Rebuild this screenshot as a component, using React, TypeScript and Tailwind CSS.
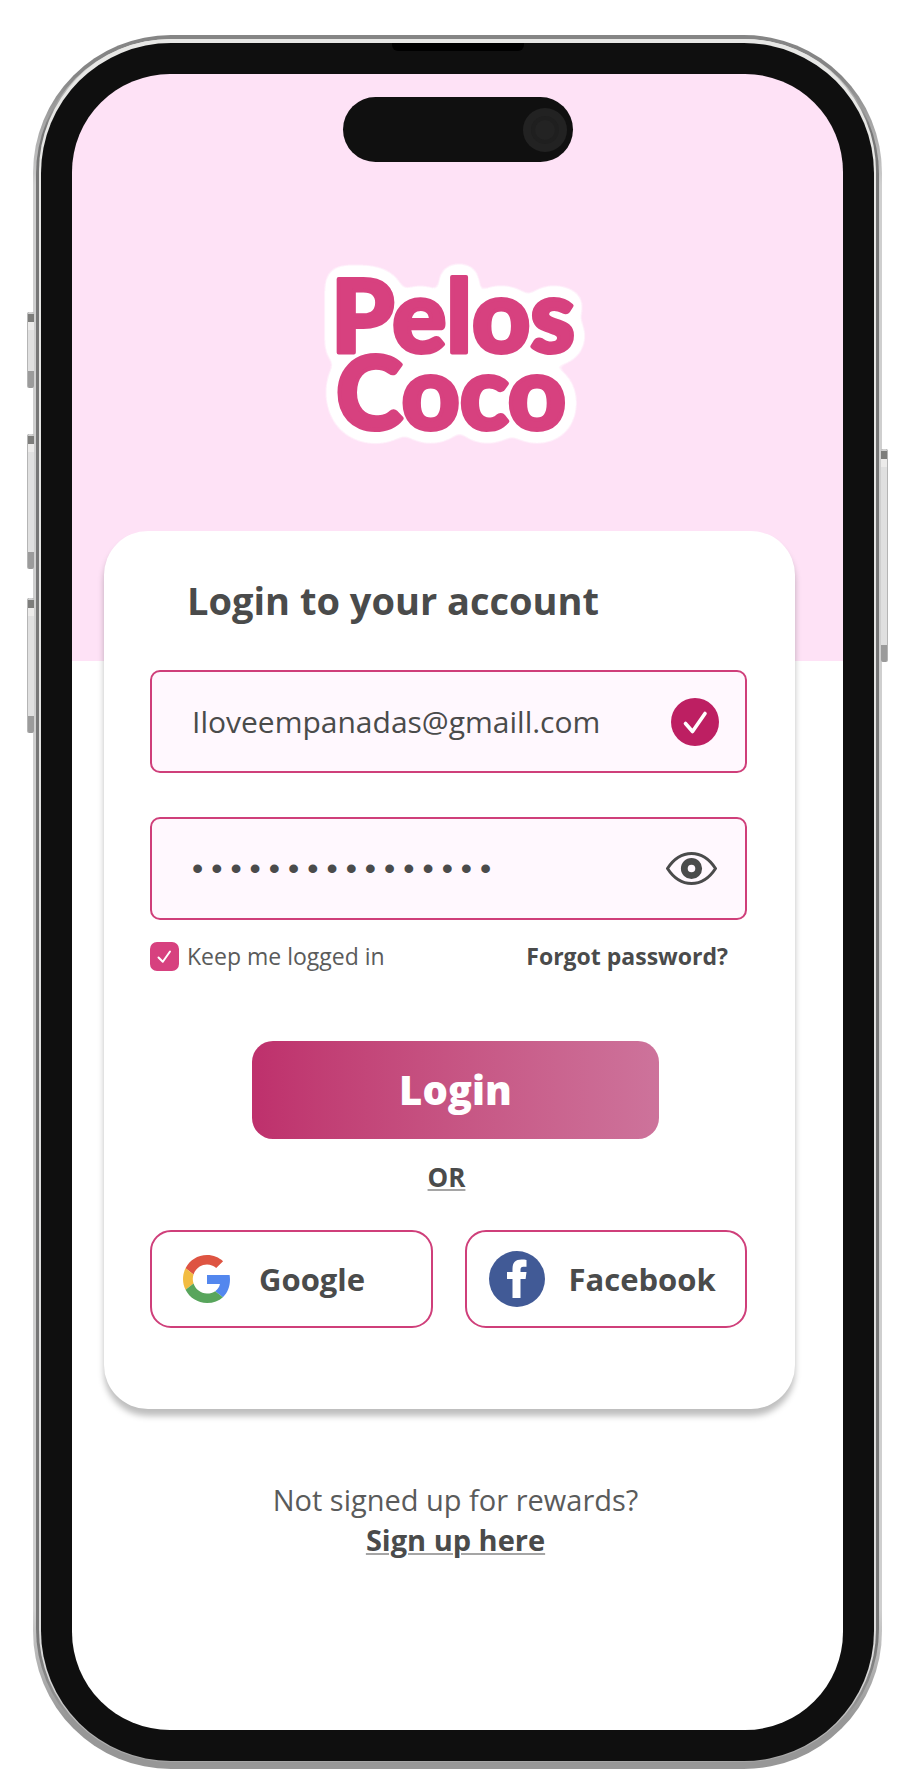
import { useState } from "react";

function SideButton({ className }: { className: string }) {
  return (
    <div className={`absolute flex w-[7px] flex-col overflow-hidden rounded-xs border-l border-[#b5b5b5] bg-[#e0e0e0] ${className}`}>
      <div className="h-[10px] border-t-2 border-[#d0d0d0] bg-[#7d7d7b]" />
      <div className="h-2 bg-[#ecebea]" />
      <div className="flex-1" />
      <div className="h-[17px] bg-[#9b9b9b]" />
    </div>
  );
}

function Logo() {
  return (
    <svg viewBox="0 0 310 220" className="h-[220px] w-[310px]" role="img" aria-label="Pelos Coco">
      <filter id="sticker" x="-10%" y="-10%" width="120%" height="120%" colorInterpolationFilters="sRGB">
        <feGaussianBlur in="SourceAlpha" stdDeviation="8" />
        <feComponentTransfer result="halo">
          <feFuncR type="linear" slope="0" intercept="1" />
          <feFuncG type="linear" slope="0" intercept="1" />
          <feFuncB type="linear" slope="0" intercept="1" />
          <feFuncA type="linear" slope="30" intercept="-1.200" />
        </feComponentTransfer>
        <feMerge>
          <feMergeNode in="halo" />
          <feMergeNode in="SourceGraphic" />
        </feMerge>
      </filter>
      <rect x="50" y="70" width="205" height="100" rx="30" fill="#fff" />
      <g
        filter="url(#sticker)"
        fontFamily="Lato, sans-serif"
        fontWeight="900"
        fontSize="101"
        fill="#d7417f"
        stroke="#d7417f"
        strokeWidth="4"
        strokeLinejoin="round"
        textAnchor="middle"
      >
        <text x="152" y="111">Pelos</text>
        <text x="150" y="188">Coco</text>
      </g>
    </svg>
  );
}

function CheckBadge() {
  return (
    <svg viewBox="0 0 48 48" className="size-12 shrink-0" aria-hidden="true">
      <circle cx="24" cy="24" r="24" fill="#bd1f62" />
      <path d="M14.500 25.500 21.500 33.500 34 15.500" fill="none" stroke="#fff" strokeWidth="3.600" strokeLinecap="round" strokeLinejoin="round" />
    </svg>
  );
}

function Eye() {
  return (
    <svg viewBox="0 0 51 33" className="h-[33px] w-[51px]" aria-hidden="true">
      <path
        d="M1.500 16.500C7 8 15 1.500 25.500 1.500S44 8 49.500 16.500C44 25 36 31.500 25.500 31.500S7 25 1.500 16.500Z"
        fill="none"
        stroke="#4a4b4b"
        strokeWidth="3"
        strokeLinejoin="round"
      />
      <circle cx="25.500" cy="16.500" r="7.200" fill="none" stroke="#4a4b4b" strokeWidth="6.800" />
    </svg>
  );
}

function GoogleIcon() {
  return (
    <svg viewBox="0 0 48 48" className="size-12 shrink-0" aria-hidden="true">
      <path fill="#de5442" d="M24 9.500c3.540 0 6.710 1.220 9.210 3.600l6.850-6.850C35.900 2.380 30.470 0 24 0 14.620 0 6.510 5.380 2.560 13.220l7.980 6.190C12.430 13.720 17.740 9.500 24 9.500z" />
      <path fill="#5387ee" d="M46.980 24.550c0-1.570-.15-3.090-.38-4.550H24v9.020h12.940c-.58 2.960-2.260 5.480-4.780 7.180l7.730 6c4.510-4.180 7.090-10.360 7.090-17.650z" />
      <path fill="#f2bc42" d="M10.530 28.590c-.48-1.450-.76-2.990-.76-4.590s.27-3.140.76-4.590l-7.980-6.190C.92 16.460 0 20.120 0 24c0 3.880.92 7.540 2.560 10.780l7.970-6.190z" />
      <path fill="#58a55c" d="M24 48c6.480 0 11.930-2.130 15.890-5.810l-7.730-6c-2.150 1.450-4.920 2.300-8.160 2.300-6.260 0-11.570-4.220-13.470-9.910l-7.980 6.190C6.510 42.620 14.620 48 24 48z" />
    </svg>
  );
}

function FacebookIcon() {
  return (
    <svg viewBox="0 0 56 56" className="size-14 shrink-0" aria-hidden="true">
      <circle cx="28" cy="28" r="28" fill="#415a96" />
      <path
        fill="#fff"
        d="M23.500 47V28H18v-7h5.500v-3.500C23.500 11.500 26.500 8.500 32.500 8.500c2 0 3.500.2 5 .4v6.800h-3.200c-2 0-2.800 1-2.800 2.900V21h6l-.9 7h-5.100v19z"
      />
    </svg>
  );
}

export default function App() {
  const [email, setEmail] = useState("Iloveempanadas@gmaill.com");
  const [password, setPassword] = useState("empanadas1234567");
  const [visible, setVisible] = useState(false);
  const [keep, setKeep] = useState(true);

  return (
    <main className="flex min-h-screen justify-center bg-white pt-[35px] pb-[19px] pl-[33px] pr-[23px] font-['Open_Sans',sans-serif] text-[#4a4b4b]">
      <div className="relative flex w-full max-w-[849px] flex-col rounded-[138px] bg-[linear-gradient(#858585_40px,#cfcfcf_150px,#cfcfcf_calc(100%_-_160px),#979797_calc(100%_-_50px))] px-[3px] pt-1 pb-[5px]">
        <SideButton className="-left-[6px] top-[277px] h-[76px]" />
        <SideButton className="-left-[6px] top-[399px] h-[135px]" />
        <SideButton className="-left-[6px] top-[563px] h-[135px]" />
        <SideButton className="-right-[6px] top-[414px] h-[213px] -scale-x-100" />

        <div className="flex flex-1 flex-col rounded-[135px] bg-[linear-gradient(#e8e8e6_20px,#777777_90px,#777777_calc(100%_-_120px),#979797_calc(100%_-_50px))] px-[3px] pb-[2px]">
          <div className="flex flex-1 flex-col rounded-[132px] bg-[linear-gradient(#e8e8e6_0px,#dadada_calc(100%_-_90px),#a5a5a5)] px-[2px] pt-1 pb-px">
            <div className="relative flex flex-1 flex-col rounded-[130px] bg-[#0f0f0f] p-[31px]">
              <div className="absolute top-0 left-1/2 h-2 w-[132px] -translate-x-1/2 rounded-b-md bg-black" />
              <div className="flex flex-1 flex-col items-center overflow-hidden rounded-[98px] bg-[linear-gradient(#fee2f6_587px,#ffffff_587px)] px-8">
                <div className="mt-[23px] flex h-[65px] w-[230px] items-center justify-end rounded-full bg-[#101010] px-[6px]">
                  <div className="flex size-11 items-center justify-center rounded-full bg-[#222222]">
                    <div className="size-7 rounded-full border-4 border-[#1f1f1f] bg-[#232323]" />
                  </div>
                </div>

                <div className="mt-[79px] mr-1">
                  <Logo />
                </div>

                <form
                  className="mt-[70px] mr-4 h-[878px] self-stretch rounded-[44px] bg-white pr-12 pl-[46px] shadow-[0_7px_6px_rgba(0,0,0,0.26)]"
                  onSubmit={(e) => e.preventDefault()}
                >
                  <h1 className="mt-11 pl-[37px] text-[38px] leading-[50px] font-bold">Login to your account</h1>

                  <div className="mt-[45px] flex h-[103px] items-center rounded-[10px] border-2 border-[#cf3f7a] bg-[#fff8fe] pr-[26px] pl-10">
                    <input
                      type="email"
                      aria-label="Email"
                      value={email}
                      onChange={(e) => setEmail(e.target.value)}
                      className="h-full min-w-0 flex-1 bg-transparent text-[30px] font-medium outline-none"
                    />
                    <CheckBadge />
                  </div>

                  <div className="mt-11 flex h-[103px] items-center rounded-[10px] border-2 border-[#cf3f7a] bg-[#fff8fe] pr-7 pl-9">
                    <input
                      type={visible ? "text" : "password"}
                      aria-label="Password"
                      value={password}
                      onChange={(e) => setPassword(e.target.value)}
                      className="h-full min-w-0 flex-1 bg-transparent pt-1 font-['Liberation_Mono',monospace] text-[32px] outline-none"
                    />
                    <button type="button" aria-label="Show password" onClick={() => setVisible(!visible)}>
                      <Eye />
                    </button>
                  </div>

                  <div className="mt-5 flex h-[32px] items-center justify-between pr-[19px]">
                    <label className="flex items-center gap-2 text-[23px]">
                      <span className="relative flex size-[29px]">
                        <input
                          type="checkbox"
                          checked={keep}
                          onChange={(e) => setKeep(e.target.checked)}
                          className="peer size-[29px] appearance-none rounded-[7px] border-2 border-[#d7417f] checked:bg-[#d7417f]"
                        />
                        <svg viewBox="0 0 29 29" className="pointer-events-none absolute inset-0 hidden size-[29px] peer-checked:block" aria-hidden="true">
                          <path d="M8.500 15.500 12.800 19.800 20 9.500" fill="none" stroke="#fff" strokeWidth="2" strokeLinecap="round" strokeLinejoin="round" />
                        </svg>
                      </span>
                      <span className="text-[#5a5b5b]">Keep me logged in</span>
                    </label>
                    <a href="#forgot" className="text-[23px] font-bold">Forgot password?</a>
                  </div>

                  <div className="mt-[69px] flex flex-col items-center pl-[14px]">
                    <button type="submit" className="h-[98px] w-[407px] rounded-[21px] bg-linear-to-r from-[#be306c] to-[#cd739b] text-[40px] font-extrabold text-white">
                      Login
                    </button>
                  </div>
                  <p className="mt-5 mr-1 h-9 text-center text-[26px] leading-9 font-bold underline decoration-[#a5a5a5] decoration-2 underline-offset-2">OR</p>

                  <div className="mt-[35px] grid grid-cols-2 gap-8">
                    <button type="button" className="flex h-[98px] items-center gap-7 rounded-[21px] border-2 border-[#cf3f7a] pl-[31px] text-[31px] font-bold">
                      <GoogleIcon />
                      Google
                    </button>
                    <button type="button" className="flex h-[98px] items-center gap-6 rounded-[21px] border-2 border-[#cf3f7a] pl-[22px] text-[31px] font-bold">
                      <FacebookIcon />
                      Facebook
                    </button>
                  </div>
                </form>

                <p className="mt-[71px] mr-1 text-center text-[29px] leading-10">
                  <span className="block text-[#5a5b5b]">Not signed up for rewards?</span>
                  <a href="#signup" className="font-bold underline decoration-[#a5a5a5] decoration-2 underline-offset-2">Sign up here</a>
                </p>
              </div>
            </div>
          </div>
        </div>
      </div>
    </main>
  );
}
